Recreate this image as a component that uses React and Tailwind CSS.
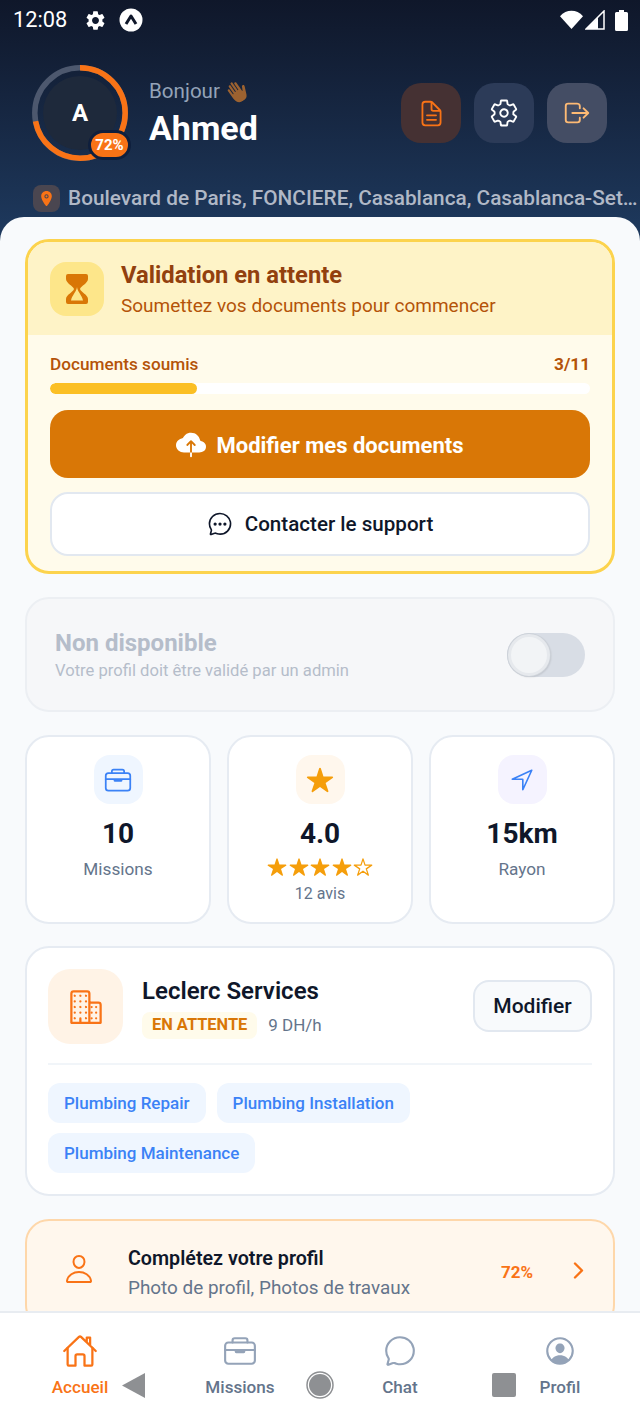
import React from "react";
import {
  IoDocumentTextOutline, IoSettingsOutline, IoLogOutOutline, IoBriefcaseOutline, IoStar, IoStarOutline,
  IoNavigateOutline, IoBusinessOutline, IoPersonOutline, IoChevronForward, IoHomeOutline, IoChatbubbleOutline,
  IoPersonCircleOutline, IoCloudUpload, IoChatbubbleEllipsesOutline, IoLocation, IoHandLeft,
} from "react-icons/io5";
import { MdSettings } from "react-icons/md";

function ProgressRing() {
  const r = 45.2;
  const c = 2 * Math.PI * r;
  return (
    <div className="relative w-[96px] h-[96px] shrink-0">
      <svg width="96" height="96" viewBox="0 0 96 96" className="block">
        <circle cx="48" cy="48" r={r} fill="none" stroke="#4d586e" strokeWidth="5.5" />
        <circle cx="48" cy="48" r={r} fill="none" stroke="#f97316" strokeWidth="5.5" strokeDasharray={`${c * 0.72} ${c}`} transform="rotate(-90 48 48)" />
      </svg>
      <div className="absolute left-[11px] top-[11px] w-[74px] h-[74px] rounded-full bg-[#1e293b] flex items-center justify-center text-white text-[24px] font-bold">A</div>
      <div className="absolute left-[56px] top-[65px] w-[43px] h-[30px] rounded-full bg-[#f97316] border-[3px] border-[#0f1f3d] flex items-center justify-center text-white text-[15px] font-bold">72%</div>
    </div>
  );
}

function HeadBtn({ className, children }) {
  return <div className={`w-[60px] h-[60px] rounded-[20px] flex items-center justify-center ${className}`}>{children}</div>;
}

function StatCard({ iconBg, icon, value, label, children }) {
  return (
    <div className="flex-1 h-[189px] rounded-[24px] bg-white border-2 border-[#e6ebf2] flex flex-col items-center pt-[18px]">
      <div className={`w-[49px] h-[49px] rounded-[16px] flex items-center justify-center ${iconBg}`}>{icon}</div>
      <div className="mt-[13px] text-[28px] leading-[34px] font-bold text-[#0f172a]">{value}</div>
      {label && <div className="mt-[7px] text-[17.2px] leading-[22px] text-[#64748b]">{label}</div>}
      {children}
    </div>
  );
}

function Chip({ children }) {
  return <div className="h-[40px] pt-[1px] px-[16px] rounded-[12px] bg-[#eff6ff] text-[#3b82f6] text-[17px] font-medium flex items-center">{children}</div>;
}

function NavItem({ icon, label, active }) {
  return (
    <div className="flex flex-col items-center pt-[20px]">
      <div className="h-[36px] flex items-center">{icon}</div>
      <div className={`mt-[7px] text-[17.1px] leading-[22px] font-medium ${active ? "text-[#f97316]" : "text-[#64748b]"}`}>{label}</div>
    </div>
  );
}

export default function App() {
  return (
    <div className="relative w-[640px] h-[1422px] overflow-hidden flex flex-col bg-[#f8fafc] font-['Roboto',sans-serif]">
      <header className="h-[241px] shrink-0 bg-gradient-to-b from-[#0f172a] to-[#1e3a5f]">
        <div className="h-[40px] pl-[13px] pr-[12px] flex items-center text-white">
          <span className="text-[21.8px] leading-none">12:08</span>
          <MdSettings className="ml-[17px] text-[23px]" />
          <svg width="24" height="24" viewBox="0 0 24 24" className="ml-[12px]">
            <circle cx="12" cy="12" r="11.5" fill="#fff" />
            <path d="M7 16 L12 8 L17 16" fill="none" stroke="#0f172a" strokeWidth="3" strokeLinejoin="round" />
          </svg>
          <div className="ml-auto flex items-center">
            <svg width="23" height="20" viewBox="0 0 24 20"><path d="M0 6 C6.5 -1.5 17.5 -1.5 24 6 L12 19.5 Z" fill="#fff" /></svg>
            <svg width="20" height="20" viewBox="0 0 20 20" className="ml-[2px]">
              <path d="M19 1 V19 H1 Z" fill="none" stroke="#fff" strokeWidth="1.5" />
              <path d="M13 7.5 V19 H1 Z" fill="#fff" />
            </svg>
            <svg width="13" height="21" viewBox="0 0 13 21" className="ml-[10px]"><path d="M4 0 H9 V2 H11.5 A1.5 1.5 0 0 1 13 3.5 V19.5 A1.5 1.5 0 0 1 11.5 21 H1.5 A1.5 1.5 0 0 1 0 19.5 V3.5 A1.5 1.5 0 0 1 1.5 2 H4 Z" fill="#fff" /></svg>
          </div>
        </div>
        <div className="mt-[25px] pl-[32px] pr-[33px] flex items-center">
          <ProgressRing />
          <div className="ml-[21px]">
            <div className="flex items-center text-[20.6px] leading-[26px] text-[#94a3b8]">
              Bonjour
              <IoHandLeft className="ml-[7px] text-[22px] text-[#9c6230] rotate-[-35deg]" />
            </div>
            <div className="mt-[3px] text-[34px] leading-[42px] font-bold text-white">Ahmed</div>
          </div>
          <div className="ml-auto flex gap-[13px]">
            <HeadBtn className="bg-[#453133]"><IoDocumentTextOutline className="text-[29px] text-[#f97316]" /></HeadBtn>
            <HeadBtn className="bg-[#2c3b58]"><IoSettingsOutline className="text-[30px] text-white" /></HeadBtn>
            <HeadBtn className="bg-[#444d64]"><IoLogOutOutline className="text-[30px] text-[#fdba74]" /></HeadBtn>
          </div>
        </div>
        <div className="mt-[23px] pl-[33px] flex items-center">
          <div className="w-[27px] h-[27px] rounded-[8px] bg-[#4a4650] flex items-center justify-center shrink-0">
            <IoLocation className="text-[17px] text-[#f97316]" />
          </div>
          <div className="ml-[8px] whitespace-nowrap text-[20.8px] leading-[28px] font-medium text-[#b0b8c6]">Boulevard de Paris, FONCIERE, Casablanca, Casablanca-Set…</div>
        </div>
      </header>

      <main className="relative -mt-[24px] flex-1 min-h-0 overflow-hidden rounded-t-[24px] bg-[#f8fafc] px-[25px] pt-[22px] flex flex-col gap-[23px]">
        <section className="h-[335px] shrink-0 rounded-[24px] border-[3px] border-[#fcd34d] bg-[#fffbeb] overflow-hidden">
          <div className="h-[93px] bg-[#fef3c7] pl-[22px] flex items-center">
            <div className="w-[54px] h-[54px] rounded-[16px] bg-[#fde68a] flex items-center justify-center">
              <svg width="22" height="30" viewBox="0 0 22 30">
                <path d="M2 0 H20 a2 2 0 0 1 2 2 V5 C22 9 15 12 14 15 C15 18 22 21 22 25 V28 a2 2 0 0 1 -2 2 H2 a2 2 0 0 1 -2 -2 V25 C0 21 7 18 8 15 C7 12 0 9 0 5 V2 a2 2 0 0 1 2 -2 Z" fill="#d97706" />
                <path d="M11 13 C11.5 18 16 21 17 26.5 H5 C6 21 10.5 18 11 13 Z" fill="#fde68a" />
              </svg>
            </div>
            <div className="ml-[17px] pt-[1px]">
              <div className="text-[23.75px] leading-[30px] font-bold text-[#92400e]">Validation en attente</div>
              <div className="mt-[4px] text-[19px] leading-[24px] text-[#b45309]">Soumettez vos documents pour commencer</div>
            </div>
          </div>
          <div className="px-[22px] pt-[18px]">
            <div className="flex justify-between text-[17.2px] leading-[22px] font-medium text-[#b45309]">
              <span>Documents soumis</span>
              <span className="font-bold">3/11</span>
            </div>
            <div className="mt-[8px] h-[11px] rounded-full bg-white overflow-hidden">
              <div className="h-full w-[27.2%] rounded-full bg-[#fbbf24]" />
            </div>
            <div className="mt-[16px] h-[68px] pt-[2px] rounded-[18px] bg-[#d97706] flex items-center justify-center gap-[10px] text-white text-[22px] font-bold">
              <IoCloudUpload className="text-[30px]" />
              Modifier mes documents
            </div>
            <div className="mt-[14px] h-[64px] rounded-[18px] bg-white border-2 border-[#e2e8f0] flex items-center justify-center gap-[12px] text-[#0f172a] text-[20.6px] font-medium">
              <IoChatbubbleEllipsesOutline className="text-[26px]" />
              Contacter le support
            </div>
          </div>
        </section>

        <section className="h-[115px] shrink-0 rounded-[24px] border-2 border-[#eceff3] bg-[#f6f7f9] pl-[28px] pr-[28px] flex items-center justify-between">
          <div>
            <div className="text-[24px] leading-[30px] font-bold text-[#b5bdca]">Non disponible</div>
            <div className="mt-[2px] text-[16.6px] leading-[22px] text-[#b5bdca]">Votre profil doit être validé par un admin</div>
          </div>
          <div className="w-[78px] h-[44px] rounded-full bg-[#d8dde5] relative">
            <div className="absolute left-[1px] top-[1px] w-[42px] h-[42px] rounded-full bg-[#f2f4f6] border-[3px] border-[#e6e9ed] shadow-[0_0_0_1px_#cdd2d9,1px_1px_2px_rgba(0,0,0,0.15)]" />
          </div>
        </section>

        <section className="shrink-0 flex gap-[16px]">
          <StatCard iconBg="bg-[#eff6ff]" icon={<IoBriefcaseOutline className="text-[28px] text-[#3b82f6]" />} value="10" label="Missions" />
          <StatCard iconBg="bg-[#fff7ed]" icon={<IoStar className="text-[28px] text-[#f59e0b]" />} value="4.0">
            <div className="mt-[6px] flex gap-[1.5px] text-[#f59e0b] text-[20px]">
              <IoStar /><IoStar /><IoStar /><IoStar /><IoStarOutline />
            </div>
            <div className="mt-[6px] text-[16px] leading-[22px] text-[#64748b]">12 avis</div>
          </StatCard>
          <StatCard iconBg="bg-[#f5f3ff]" icon={<IoNavigateOutline className="text-[26px] text-[#3b82f6]" />} value="15km" label="Rayon" />
        </section>

        <section className="-mt-[1px] h-[250px] shrink-0 rounded-[24px] bg-white border-2 border-[#e6ebf2] px-[21px] pt-[21px]">
          <div className="flex items-start">
            <div className="w-[75px] h-[75px] rounded-[22px] bg-[#fff3e6] flex items-center justify-center">
              <IoBusinessOutline className="text-[36px] text-[#f97316]" />
            </div>
            <div className="ml-[19px]">
              <div className="mt-[6px] text-[24px] leading-[32px] font-semibold text-[#0f172a]">Leclerc Services</div>
              <div className="mt-[5px] flex items-center">
                <div className="h-[27px] px-[10px] rounded-[8px] bg-[#fffbeb] text-[16.4px] font-bold text-[#d97706] flex items-center">EN ATTENTE</div>
                <div className="ml-[11px] text-[17px] text-[#64748b]">9 DH/h</div>
              </div>
            </div>
            <div className="ml-auto mt-[11px] w-[119px] h-[52px] pt-[2px] rounded-[16px] bg-[#f8fafc] border-2 border-[#e2e8f0] flex items-center justify-center text-[21px] font-medium text-[#0f172a]">Modifier</div>
          </div>
          <div className="mt-[19px] h-[2px] bg-[#f1f5f9]" />
          <div className="mt-[18px] flex flex-wrap gap-x-[11px] gap-y-[10px]">
            <Chip>Plumbing Repair</Chip>
            <Chip>Plumbing Installation</Chip>
            <Chip>Plumbing Maintenance</Chip>
          </div>
        </section>

        <section className="h-[110px] shrink-0 rounded-[24px] bg-[#fff7ed] border-2 border-[#fed7aa] flex items-start pt-[25px]">
          <IoPersonOutline className="ml-[36px] mt-[7px] text-[32px] text-[#f97316]" />
          <div className="ml-[33px]">
            <div className="text-[19.7px] leading-[26px] font-semibold text-[#0f172a]">Complétez votre profil</div>
            <div className="mt-[4px] text-[18.9px] leading-[24px] text-[#64748b]">Photo de profil, Photos de travaux</div>
          </div>
          <div className="ml-auto mt-[14px] text-[17px] leading-[24px] font-bold text-[#f97316]">72%</div>
          <IoChevronForward className="ml-[33px] mr-[22px] mt-[12px] text-[25px] text-[#f97316]" />
        </section>
      </main>

      <nav className="relative h-[111px] shrink-0 bg-white border-t-2 border-[#e8ecf1] grid grid-cols-4">
        <NavItem active label="Accueil" icon={<IoHomeOutline className="text-[36px] text-[#f97316]" />} />
        <NavItem label="Missions" icon={<IoBriefcaseOutline className="text-[34px] text-[#94a3b8]" />} />
        <NavItem label="Chat" icon={<IoChatbubbleOutline className="text-[34px] text-[#94a3b8]" />} />
        <NavItem label="Profil" icon={<IoPersonCircleOutline className="text-[34px] text-[#94a3b8]" />} />
        <svg className="absolute left-[122px] top-[60px]" width="23" height="25" viewBox="0 0 23 25"><path d="M23 0 V25 L0 12.5 Z" fill="#8e9093" /></svg>
        <svg className="absolute left-[306px] top-[58px]" width="28" height="28" viewBox="0 0 28 28"><circle cx="14" cy="14" r="13" fill="none" stroke="#8e9093" strokeWidth="1.5" /><circle cx="14" cy="14" r="11" fill="#8e9093" /></svg>
        <div className="absolute left-[492px] top-[60px] w-[24px] h-[24px] rounded-[2px] bg-[#8e9093]" />
      </nav>
    </div>
  );
}
